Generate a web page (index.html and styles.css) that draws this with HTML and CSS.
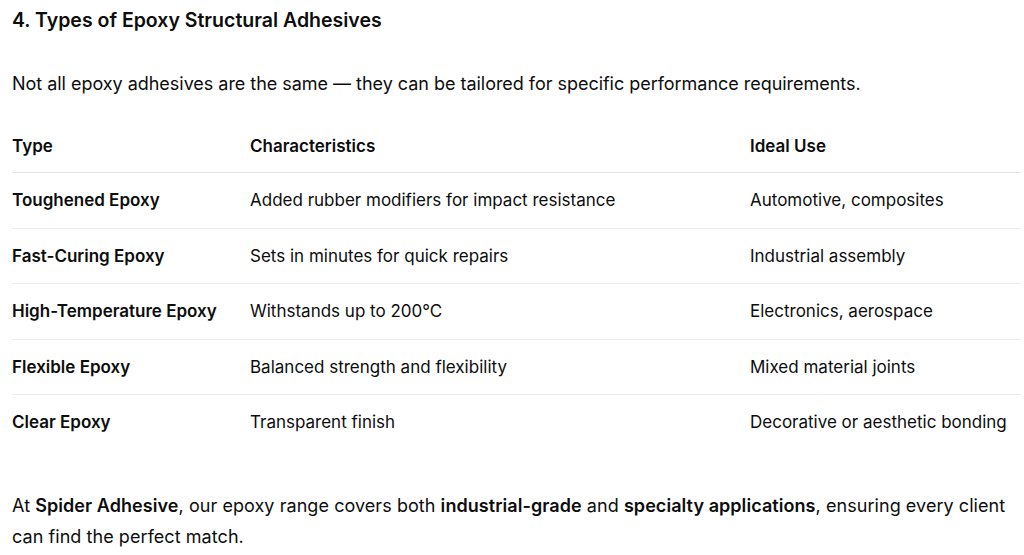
FILE: index.html
```html
<!DOCTYPE html>
<html>
<head>
<meta charset="utf-8">
<link rel="stylesheet" href="styles.css">
</head>
<body>
<div class="content">
  <h3 class="title">4. Types of Epoxy Structural Adhesives</h3>
  <p class="intro">Not all epoxy adhesives are the same — they can be tailored for specific performance requirements.</p>
  <table class="types">
    <thead>
      <tr><th class="c1">Type</th><th class="c2">Characteristics</th><th class="c3">Ideal Use</th></tr>
    </thead>
    <tbody>
      <tr><td class="name">Toughened Epoxy</td><td>Added rubber modifiers for impact resistance</td><td>Automotive, composites</td></tr>
      <tr><td class="name">Fast-Curing Epoxy</td><td>Sets in minutes for quick repairs</td><td>Industrial assembly</td></tr>
      <tr><td class="name">High-Temperature Epoxy</td><td>Withstands up to 200°C</td><td>Electronics, aerospace</td></tr>
      <tr><td class="name">Flexible Epoxy</td><td>Balanced strength and flexibility</td><td>Mixed material joints</td></tr>
      <tr><td class="name">Clear Epoxy</td><td>Transparent finish</td><td>Decorative or aesthetic bonding</td></tr>
    </tbody>
  </table>
  <p class="outro">At <strong>Spider Adhesive</strong>, our epoxy range covers both <strong>industrial-grade</strong> and <strong>specialty applications</strong>, ensuring every client can find the perfect match.</p>
</div>
</body>
</html>
```
FILE: styles.css
```css
html, body {
  margin: 0;
  padding: 0;
  background: #ffffff;
}
body {
  font-family: Inter, "Noto Sans", sans-serif;
  color: #0d0d0d;
  font-size: 18px;
  line-height: 31px;
}
.content {
  padding: 5px 3px 0 12px;
}
.title {
  margin: 0;
  font-size: 19.5px;
  font-weight: 600;
  line-height: 30px;
}
.intro {
  margin: 33px 0 0 0;
  letter-spacing: -0.03px;
}
.types {
  margin-top: 21px;
  width: 100%;
  border-collapse: collapse;
  font-size: 17px;
}
.types th {
  text-align: left;
  font-weight: 600;
  padding: 11px 0 10px 0;
  border-bottom: 1.5px solid #e3e3e3;
}
.types td {
  padding: 12px 0 11.5px 0;
  border-bottom: 1px solid #ececec;
}
.types tbody tr:last-child td {
  border-bottom: none;
}
.types .name {
  font-weight: 600;
}
.c1 { width: 238px; }
.c2 { width: 500px; }
.outro {
  margin: 40px 0 0 0;
  letter-spacing: 0.06px;
}
strong { font-weight: 600; }
```
